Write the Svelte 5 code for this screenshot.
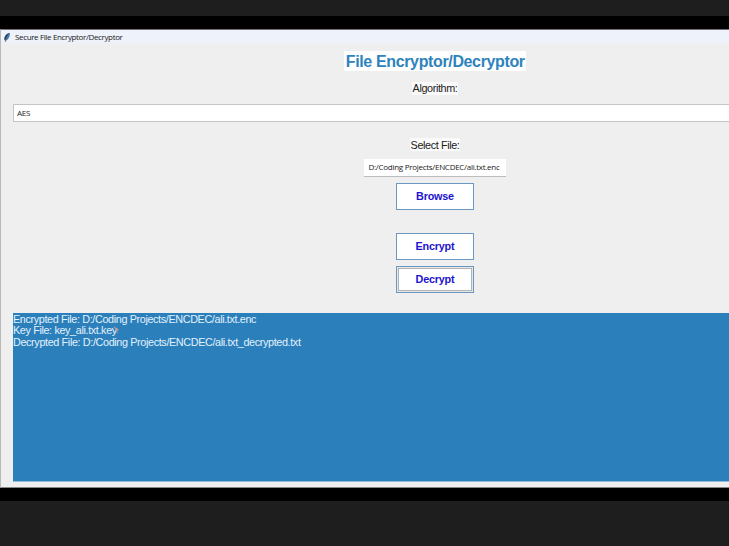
<script>
  let algorithm = 'AES';
  let path = 'D:/Coding Projects/ENCDEC/ali.txt.enc';
  let log = [
    'Encrypted File: D:/Coding Projects/ENCDEC/ali.txt.enc',
    'Key File: key_ali.txt.key',
    'Decrypted File: D:/Coding Projects/ENCDEC/ali.txt_decrypted.txt'
  ];
</script>

<div class="screen">
  <div class="stage">
    <main class="window">
      <header>
        <svg width="8" height="12" viewBox="0 0 8 12">
          <path d="M1.6 8C1 4.8 3 2 6.8 .8C7.2 3.6 6 7.2 3.1 8.6Z" fill="#4b7ba8" />
          <path d="M1.6 8C1 4.8 3 2 6.3 1C4 3.2 2.8 5.4 2.4 8.5Z" fill="#1b3a59" />
          <path d="M5.6 2.8Q3.2 5.5 2.2 10" fill="none" stroke="#46637f" stroke-width=".8" />
        </svg>
        <span>Secure File Encryptor/Decryptor</span>
      </header>
      <h1>File Encryptor/Decryptor</h1>
      <div class="label algorithm">Algorithm:</div>
      <div class="combo"><span>{algorithm}</span></div>
      <div class="label select">Select File:</div>
      <div class="entry"><span>{path}</span></div>
      <button class="browse">Browse</button>
      <button class="encrypt">Encrypt</button>
      <button class="decrypt">Decrypt</button>
      <div class="output">
        {#each log as line, i}
          <div class="line"><span>{line}</span>{#if i === 1}<svg class="pointer" width="6" height="9" viewBox="0 0 6 9"><path d="M1 1L5 4L3.4 4.6L4.3 7" fill="none" stroke="#b99a91" stroke-width="1.1" /></svg>{/if}</div>
        {/each}
      </div>
    </main>
  </div>
</div>

<style>
  :global(body) { margin: 0; background: #1e1e1e; }
  .screen {
    box-sizing: border-box;
    width: 729px;
    height: 546px;
    padding-top: 16px;
    overflow: hidden;
    background: #1e1e1e;
    font-family: "Liberation Sans", sans-serif;
  }
  .stage {
    box-sizing: border-box;
    height: 485px;
    padding-top: 13px;
    overflow: hidden;
    background: #000;
  }
  .window {
    box-sizing: border-box;
    display: flex;
    flex-direction: column;
    align-items: center;
    width: 870px;
    height: 459px;
    border: 1px solid #b9b9b9;
    border-top-color: #777074;
    border-bottom-color: #888;
    background: #efefef;
  }
  header {
    box-sizing: border-box;
    display: flex;
    align-items: center;
    gap: 4px;
    width: 100%;
    height: 15px;
    padding-left: 2px;
    background: linear-gradient(#eef2fa 75%, #efefef);
    color: #202124;
    font: 8px/13px "Open Sans", sans-serif;
    letter-spacing: -.36px;
    white-space: nowrap;
  }
  header svg { flex: none; }
  header span { height: 15px; }
  h1 {
    height: 20px;
    margin: 6px 0 0;
    padding: 0 1px 0 1.5px;
    background: #fff;
    color: #2e83bd;
    font-size: 16px;
    line-height: 21px;
    letter-spacing: -.36px;
    white-space: nowrap;
  }
  .label {
    height: 13px;
    padding: 0 1px;
    background: #fafafa;
    color: #202020;
    font-size: 10.8px;
    line-height: 13px;
    letter-spacing: -.38px;
  }
  .algorithm { margin-top: 11px; }
  .combo {
    box-sizing: border-box;
    width: 844px;
    height: 18px;
    margin-top: 9px;
    padding-left: 3px;
    border: 1px solid #c5c5c5;
    background: #fff;
    color: #222;
    font: 8px/16px "Open Sans", sans-serif;
    letter-spacing: -.3px;
  }
  .select { margin-top: 16px; line-height: 14px; }
  .entry {
    box-sizing: border-box;
    width: 142px;
    height: 18px;
    margin-top: 8px;
    padding-right: 2px;
    border-bottom: 1px solid #bcbcbc;
    background: #fff;
    color: #222;
    font: 8px/15px "Open Sans", sans-serif;
    letter-spacing: -.28px;
    text-align: center;
    white-space: nowrap;
  }
  button {
    box-sizing: border-box;
    width: 78px;
    height: 27px;
    padding: 0;
    border: 1px solid #6b98c2;
    border-radius: 0;
    background: #fff;
    color: #1c12d1;
    font: bold 10.8px/25px "Liberation Sans", sans-serif;
    letter-spacing: -.2px;
  }
  .browse { margin-top: 6px; }
  .encrypt { margin-top: 23px; }
  .decrypt { margin-top: 6px; box-shadow: inset 0 0 0 1px #e7e7e7, inset 0 0 0 2px #b4b4b4; }
  .output {
    box-sizing: border-box;
    width: 844px;
    height: 169px;
    margin-top: 20px;
    padding: 1px 0;
    border-bottom: 1px solid #92bedb;
    background: #2b80bc;
    color: #e3f1fb;
    font-size: 10.8px;
    line-height: 11.3px;
    letter-spacing: -.36px;
  }
  .line { display: flex; height: 11.3px; white-space: pre; }
  .pointer { margin-left: -4px; margin-top: 1px; }
</style>
